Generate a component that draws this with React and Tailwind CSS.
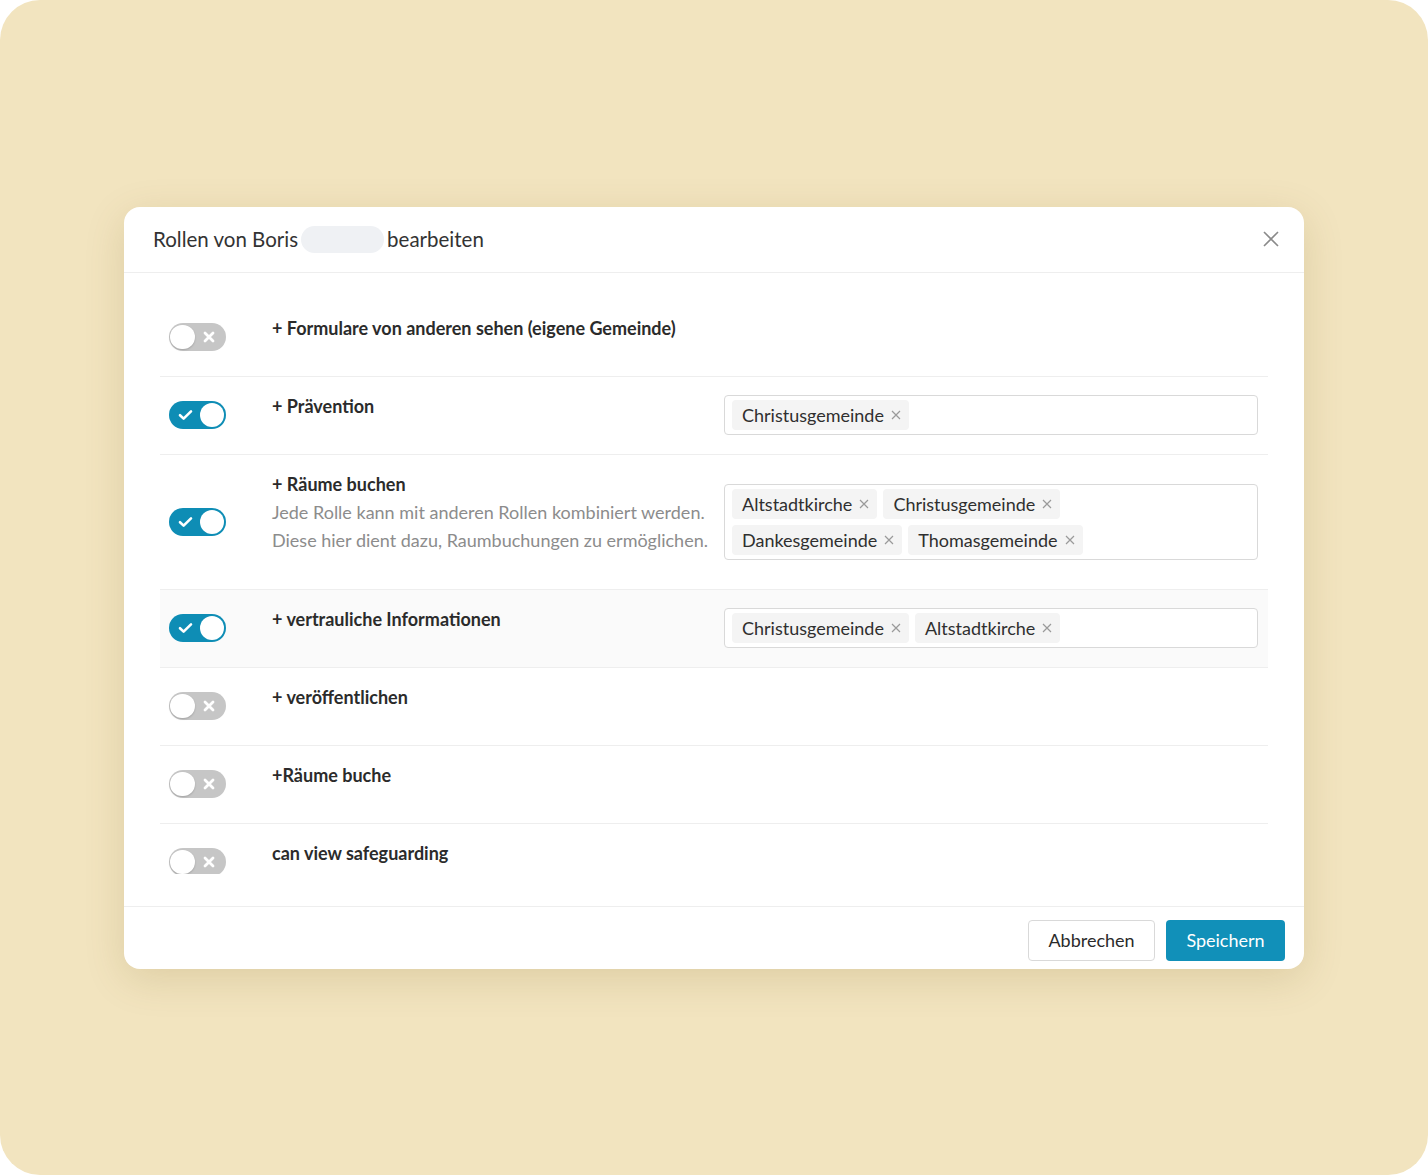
import React from "react";

const roles = [
  { on: false, title: "+ Formulare von anderen sehen (eigene Gemeinde)" },
  { on: true, title: "+ Prävention", tags: [["Christusgemeinde"]] },
  {
    on: true,
    title: "+ Räume buchen",
    desc: [
      "Jede Rolle kann mit anderen Rollen kombiniert werden.",
      "Diese hier dient dazu, Raumbuchungen zu ermöglichen.",
    ],
    tags: [
      ["Altstadtkirche", "Christusgemeinde"],
      ["Dankesgemeinde", "Thomasgemeinde"],
    ],
  },
  {
    on: true,
    title: "+ vertrauliche Informationen",
    tags: [["Christusgemeinde", "Altstadtkirche"]],
    active: true,
  },
  { on: false, title: "+ veröffentlichen" },
  { on: false, title: "+Räume buche" },
  { on: false, title: "can view safeguarding" },
];

function Toggle({ on }) {
  if (on) {
    return (
      <div className="relative h-[28px] w-[57px] shrink-0 rounded-full bg-[#0e8db5]">
        <svg
          className="absolute left-[9px] top-[8px]"
          width="15"
          height="12"
          viewBox="0 0 15 12"
          fill="none"
        >
          <path
            d="M2 6.2 5.6 9.6 13 2.4"
            stroke="white"
            strokeWidth="2.6"
            strokeLinecap="round"
            strokeLinejoin="round"
          />
        </svg>
        <div className="absolute right-[2px] top-[2px] h-[24px] w-[24px] rounded-full bg-white" />
      </div>
    );
  }
  return (
    <div className="relative h-[28px] w-[57px] shrink-0 rounded-full bg-[#c6c6c6]">
      <div className="absolute left-[1px] top-[2px] h-[24px] w-[25px] rounded-full bg-white shadow-[0_1px_2px_rgba(0,0,0,0.18)]" />
      <svg
        className="absolute left-[34px] top-[8px]"
        width="12"
        height="12"
        viewBox="0 0 12 12"
        fill="none"
      >
        <path
          d="M2 2 10 10M10 2 2 10"
          stroke="white"
          strokeWidth="2.8"
          strokeLinecap="round"
        />
      </svg>
    </div>
  );
}

function Tag({ label }) {
  return (
    <span className="flex h-[30px] items-center gap-[7px] rounded-[4px] bg-[#f4f4f4] pl-[10px] pr-[8px] text-[18px] leading-none text-[#2f2f2f]">
      {label}
      <svg width="10" height="10" viewBox="0 0 10 10" fill="none">
        <path d="M1 1 9 9M9 1 1 9" stroke="#9a9a9a" strokeWidth="1.2" />
      </svg>
    </span>
  );
}

function RoleRow({ role }) {
  return (
    <div
      className={`flex min-h-[78px] items-center border-b border-[#eeeeee] pl-[9px] pr-[10px] ${
        role.active ? "bg-[#fafafa]" : ""
      }`}
    >
      <Toggle on={role.on} />
      <div className="ml-[46px] w-[440px] shrink-0 self-start pb-[34px] pt-[15px]">
        <div className="text-[18px] font-bold leading-[28px] text-[#2b2b2b]">
          {role.title}
        </div>
        {role.desc && (
          <div className="pb-[1px]">
            {role.desc.map((line) => (
              <div key={line} className="text-[18px] leading-[28px] text-[#8c8c8c]">
                {line}
              </div>
            ))}
          </div>
        )}
      </div>
      {role.tags && (
        <div className="ml-[12px] flex flex-1 flex-col gap-[6px] rounded-[4px] border border-[#d9d9d9] bg-white px-[7px] py-[4px]">
          {role.tags.map((line) => (
            <div key={line.join()} className="flex gap-[6px]">
              {line.map((t) => (
                <Tag key={t} label={t} />
              ))}
            </div>
          ))}
        </div>
      )}
    </div>
  );
}

export default function App() {
  return (
    <div className="h-[1175px] w-[1428px] bg-white font-['Lato','Noto_Sans',sans-serif]">
      <div className="flex h-full w-full items-center justify-center rounded-[40px] bg-[#f2e4bf]">
        <div className="w-[1180px] overflow-hidden rounded-[16px] bg-white shadow-[0_10px_40px_rgba(110,85,20,0.16)]">
          {/* header */}
          <div className="flex h-[66px] items-center justify-between border-b border-[#eeeeee] pl-[29px] pr-[25px]">
            <div className="flex items-center text-[20.5px] text-[#333333]">
              <span>Rollen von Boris</span>
              <span className="mx-[3px] inline-block h-[27px] w-[83px] rounded-full bg-[#eff1f4]" />
              <span>bearbeiten</span>
            </div>
            <svg width="16" height="16" viewBox="0 0 16 16" fill="none">
              <path d="M1 1 15 15M15 1 1 15" stroke="#8a8a8a" strokeWidth="1.6" />
            </svg>
          </div>
          {/* role list, scrolled region */}
          <div className="px-[36px] pb-[32px] pt-[26px]">
            <div className="h-[575px] overflow-hidden">
              {roles.map((r) => (
                <RoleRow key={r.title} role={r} />
              ))}
            </div>
          </div>
          {/* footer */}
          <div className="flex justify-end gap-[11px] border-t border-[#eeeeee] pb-[8px] pr-[19px] pt-[13px]">
            <button className="h-[41px] w-[127px] rounded-[4px] border border-[#d9d9d9] bg-white text-[18px] text-[#2b2b2b]">
              Abbrechen
            </button>
            <button className="h-[41px] w-[119px] rounded-[4px] bg-[#1190b9] text-[18px] text-white">
              Speichern
            </button>
          </div>
        </div>
      </div>
    </div>
  );
}
